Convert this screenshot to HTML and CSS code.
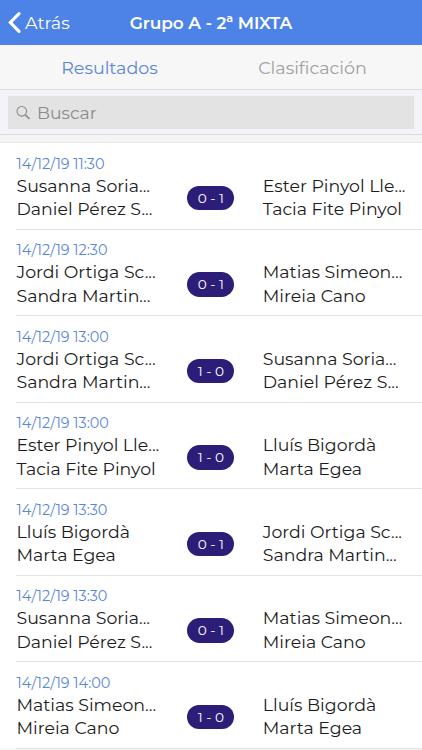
FILE: index.html
```html
<!DOCTYPE html>
<html lang="es">
<head>
  <meta charset="UTF-8">
  <meta name="viewport" content="width=device-width, initial-scale=1.0">
  <title>Grupo A - 2ª MIXTA</title>
  <link rel="stylesheet" href="styles.css">
</head>
<body>
  <header class="navbar">
    <a class="back" href="#">
      <svg width="13" height="21" viewBox="0 0 13 21"><path d="M11 1.7L2.4 10.5L11 19.3" fill="none" stroke="#fff" stroke-width="3.2" stroke-linecap="round" stroke-linejoin="miter"/></svg>
      <span>Atrás</span>
    </a>
    <h1>Grupo A - 2ª MIXTA</h1>
  </header>
  <nav class="tabs">
    <a class="tab active" href="#"><span>Resultados</span></a>
    <a class="tab" href="#"><span>Clasificación</span></a>
  </nav>
  <div class="search">
    <div class="search-box">
      <svg width="15" height="15" viewBox="0 0 15 15" fill="none" stroke="#8b8b8b"><circle cx="5.8" cy="6.3" r="4.8" stroke-width="1.1"/><path d="M9.3 9.8L13.5 13.8" stroke-width="1.6"/></svg>
      <span>Buscar</span>
    </div>
  </div>
  <main class="matches">
    <div class="match">
      <div class="date">14/12/19 11:30</div>
      <div class="teams">
        <div class="team">Susanna Soria...<br>Daniel Pérez S...</div>
        <div class="score">0 - 1</div>
        <div class="team">Ester Pinyol Lle...<br>Tacia Fite Pinyol</div>
      </div>
    </div>
    <div class="match">
      <div class="date">14/12/19 12:30</div>
      <div class="teams">
        <div class="team">Jordi Ortiga Sc...<br>Sandra Martin...</div>
        <div class="score">0 - 1</div>
        <div class="team">Matias Simeon...<br>Mireia Cano</div>
      </div>
    </div>
    <div class="match">
      <div class="date">14/12/19 13:00</div>
      <div class="teams">
        <div class="team">Jordi Ortiga Sc...<br>Sandra Martin...</div>
        <div class="score">1 - 0</div>
        <div class="team">Susanna Soria...<br>Daniel Pérez S...</div>
      </div>
    </div>
    <div class="match">
      <div class="date">14/12/19 13:00</div>
      <div class="teams">
        <div class="team">Ester Pinyol Lle...<br>Tacia Fite Pinyol</div>
        <div class="score">1 - 0</div>
        <div class="team">Lluís Bigordà<br>Marta Egea</div>
      </div>
    </div>
    <div class="match">
      <div class="date">14/12/19 13:30</div>
      <div class="teams">
        <div class="team">Lluís Bigordà<br>Marta Egea</div>
        <div class="score">0 - 1</div>
        <div class="team">Jordi Ortiga Sc...<br>Sandra Martin...</div>
      </div>
    </div>
    <div class="match">
      <div class="date">14/12/19 13:30</div>
      <div class="teams">
        <div class="team">Susanna Soria...<br>Daniel Pérez S...</div>
        <div class="score">0 - 1</div>
        <div class="team">Matias Simeon...<br>Mireia Cano</div>
      </div>
    </div>
    <div class="match">
      <div class="date">14/12/19 14:00</div>
      <div class="teams">
        <div class="team">Matias Simeon...<br>Mireia Cano</div>
        <div class="score">1 - 0</div>
        <div class="team">Lluís Bigordà<br>Marta Egea</div>
      </div>
    </div>
  </main>
</body>
</html>
```

FILE: styles.css
```css
* {
  box-sizing: border-box;
}
body {
  margin: 0;
  height: 750px;
  overflow: hidden;
  font-family: Montserrat, Inter, sans-serif;
  background: #f4f4f5;
  color: #1c1c1c;
}
a {
  text-decoration: none;
}
svg {
  display: block;
  flex: none;
}
.navbar {
  display: grid;
  grid-template-columns: 110px 1fr 110px;
  align-items: center;
  height: 45px;
  padding: 0 8px;
  background: #4d83e6;
}
.back {
  display: flex;
  align-items: center;
  gap: 4px;
  color: #fff;
  font-size: 17.5px;
}
.navbar h1 {
  margin: 0;
  color: #fff;
  font-size: 17px;
  font-weight: 600;
  letter-spacing: -0.1px;
  text-align: center;
  white-space: nowrap;
}
.tabs {
  display: flex;
  height: 45px;
  padding: 0 8px;
  background: #f7f7f7;
  border-bottom: 1px solid #dcdcde;
}
.tab {
  flex: 1;
  display: flex;
  align-items: center;
  justify-content: center;
  color: #a0a0a0;
  font-size: 17.5px;
}
.tab.active {
  color: #5a86da;
}
.search {
  height: 45px;
  padding: 6px 8px;
  background: #f4f4f8;
  border-bottom: 1px solid #dcdcde;
}
.search-box {
  display: flex;
  align-items: center;
  gap: 6px;
  height: 33px;
  padding-left: 8px;
  background: #e3e3e3;
  color: #8b8b8b;
  font-size: 17.2px;
}
.matches {
  margin-top: 7px;
  border-top: 1px solid #e8e8e8;
  background: #fff;
}
.match {
  height: 86.5px;
  margin-left: 16px;
  padding-top: 10.7px;
  border-bottom: 1px solid #e3e3e3;
}
.date {
  padding-left: 0.5px;
  color: #5a86da;
  font-size: 14.4px;
  line-height: 20px;
}
.teams {
  display: grid;
  grid-template-columns: 171.3px 47px 1fr;
  align-items: center;
}
.team {
  padding-left: 0.5px;
  font-size: 17.35px;
  line-height: 23.5px;
  white-space: nowrap;
}
.team:last-child {
  padding-left: 28.5px;
}
.score {
  height: 24.5px;
  margin-top: 2px;
  border-radius: 13px;
  background: #2b1d78;
  color: #fff;
  font-size: 13.6px;
  line-height: 25px;
  text-align: center;
}
```
